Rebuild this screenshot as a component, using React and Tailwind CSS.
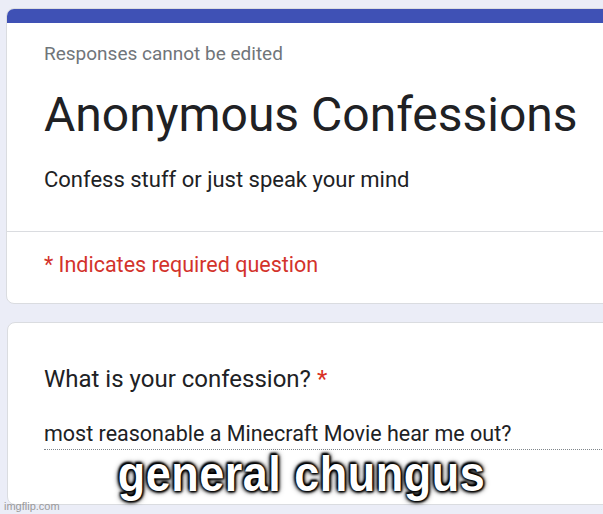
import React from 'react';

// Google Forms style confession form, with a meme caption on top.
function FormHeader() {
  return (
    <div className="ml-[6px] mt-[8px] w-[720px] overflow-hidden rounded-lg border border-[#dadce0] bg-white">
      <div className="h-[14px] bg-[#3f51b5]" />
      <div className="px-[37px] pt-[19px]">
        <div className="text-[19px] leading-[24px] text-[#70757a]">Responses cannot be edited</div>
        <div className="mt-[21px] text-[48px] leading-[56px] text-[#202124]">Anonymous Confessions</div>
        <div className="mt-[23px] text-[22px] leading-[28px] text-[#202124]">Confess stuff or just speak your mind</div>
      </div>
      <div className="mt-[37px] border-t border-[#dadce0]" />
      <div className="px-[37px] pt-[19px] pb-[24px] text-[21.5px] leading-[28px] text-[#d3332b]">
        * Indicates required question
      </div>
    </div>
  );
}

function QuestionCard() {
  return (
    <div className="ml-[7px] mt-[18px] h-[183px] w-[720px] rounded-lg border border-[#dadce0] bg-white">
      <div className="pl-[36px] pt-[40px]">
        <div className="text-[24px] leading-[32px] text-[#202124]">
          What is your confession? <span className="text-[#d93025]">*</span>
        </div>
        <div className="mt-[25px] border-b border-dotted border-[#80868b] pb-px text-[21.5px] leading-[28px] text-[#202124]">
          most reasonable a Minecraft Movie hear me out?
        </div>
      </div>
    </div>
  );
}

export default function App() {
  return (
    <div className="relative h-[514px] w-[603px] overflow-hidden bg-[#ebedf7] font-['Roboto',sans-serif]">
      <FormHeader />
      <QuestionCard />

      {/* meme caption */}
      <div className="absolute inset-x-0 top-[451px] scale-y-[1.1] text-center font-['Liberation_Sans',Arial,sans-serif] text-[45px] font-bold leading-none tracking-[0.5px] text-white [text-shadow:0_0_3px_#000,0_0_3px_#000,0_0_4px_#000,0_0_6px_#000,1px_1px_2px_#000,-1px_-1px_2px_#000]">
        general chungus
      </div>

      {/* watermark */}
      <div className="absolute bottom-[1px] left-[4px] font-['Liberation_Sans',Arial,sans-serif] text-[11px] leading-[14px] text-[#9a9a9a]">
        imgflip.com
      </div>
    </div>
  );
}
